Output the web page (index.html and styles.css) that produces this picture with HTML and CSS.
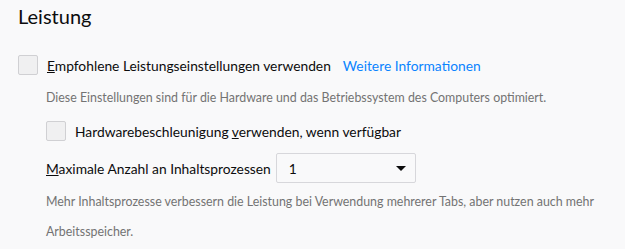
FILE: index.html
```html
<!DOCTYPE html>
<html lang="de">
<head>
  <meta charset="UTF-8">
  <title>Leistung</title>
  <link rel="stylesheet" href="styles.css">
</head>
<body>
  <div class="section">
    <h1>Leistung</h1>

    <!-- Empfohlene Einstellungen -->
    <label class="check-row">
      <span class="checkbox"></span>
      <span><u>E</u>mpfohlene Leistungseinstellungen verwenden</span>
      <a class="link" href="#">Weitere Informationen</a>
    </label>

    <div class="indent">
      <p class="desc">Diese Einstellungen sind für die Hardware und das Betriebssystem des Computers optimiert.</p>

      <label class="check-row">
        <span class="checkbox"></span>
        <span>Hardwarebeschleunigung <u>v</u>erwenden, wenn verfügbar</span>
      </label>

      <div class="select-row">
        <span><u>M</u>aximale Anzahl an Inhaltsprozessen</span>
        <div class="select">
          <span>1</span>
          <span class="arrow"></span>
        </div>
      </div>
      <p class="desc wrap">Mehr Inhaltsprozesse verbessern die Leistung bei Verwendung mehrerer Tabs, aber nutzen auch mehr Arbeitsspeicher.</p>
    </div>
  </div>
</body>
</html>
```

FILE: styles.css
```css
body {
  margin: 0;
  background-color: #f9f9fa;
  color: #0c0c0d;
  font-family: Lato, "Noto Sans", sans-serif;
  font-size: 13.8px;
}
.section {
  padding: 0 18px;
}
h1 {
  margin: 0;
  padding-top: 2px;
  font-size: 20px;
  font-weight: normal;
  line-height: 28px;
}
u {
  text-decoration: underline;
}
.check-row {
  display: flex;
  align-items: center;
  height: 20px;
}
.section > .check-row {
  margin-top: 25px;
}
.checkbox {
  width: 18px;
  height: 18px;
  border: 1px solid #d0d0d3;
  border-radius: 2px;
  background-color: #f0f0f1;
  margin-right: 9px;
  flex: none;
}
.link {
  margin-left: 12px;
  color: #0a84ff;
  text-decoration: none;
}
.desc {
  margin: 0;
  font-size: 12.4px;
  color: #737373;
  line-height: 30px;
}
.indent {
  padding-left: 28px;
  margin-top: 8px;
}
.indent > .check-row {
  margin-top: 8px;
}
.select-row {
  display: flex;
  align-items: center;
  margin-top: 12px;
}
.select {
  display: flex;
  align-items: center;
  justify-content: space-between;
  box-sizing: border-box;
  width: 140px;
  height: 30px;
  margin-left: 5px;
  padding: 0 9px 0 12px;
  border: 1px solid #d7d7db;
  border-radius: 2px;
  background-color: #f9f9fa;
}
.arrow {
  width: 0;
  height: 0;
  border-left: 5px solid transparent;
  border-right: 5px solid transparent;
  border-top: 5px solid #0c0c0d;
}
.wrap {
  margin-top: 4px;
}
```
